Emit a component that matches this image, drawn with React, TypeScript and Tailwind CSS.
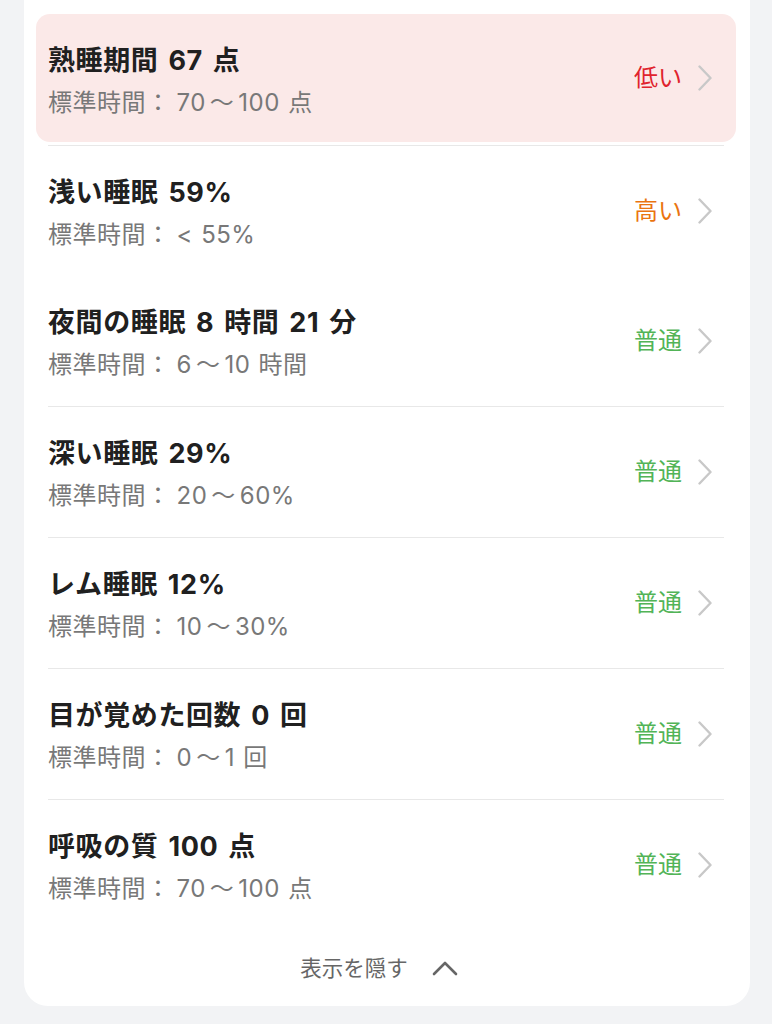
import React from 'react';

type Level = 'low' | 'high' | 'normal';

interface SleepItem {
  title: string;
  range: string;
  level: Level;
}

const items: SleepItem[] = [
  { title: '熟睡期間 67 点', range: '70～100 点', level: 'low' },
  { title: '浅い睡眠 59%', range: '< 55%', level: 'high' },
  { title: '夜間の睡眠 8 時間 21 分', range: '6～10 時間', level: 'normal' },
  { title: '深い睡眠 29%', range: '20～60%', level: 'normal' },
  { title: 'レム睡眠 12%', range: '10～30%', level: 'normal' },
  { title: '目が覚めた回数 0 回', range: '0～1 回', level: 'normal' },
  { title: '呼吸の質 100 点', range: '70～100 点', level: 'normal' },
];

const levelLabel: Record<Level, { text: string; className: string }> = {
  low: { text: '低い', className: 'text-[#e0232d]' },
  high: { text: '高い', className: 'text-[#ea7410]' },
  normal: { text: '普通', className: 'text-[#52b457]' },
};

const Chevron = () => (
  <svg width="14" height="26" viewBox="0 0 14 26" fill="none" aria-hidden="true">
    <polyline points="1.5,1.5 12.5,13 1.5,24.5" stroke="#c8c8c8" strokeWidth="2.4" strokeLinecap="round" strokeLinejoin="round" />
  </svg>
);

const Range: React.FC<{ value: string }> = ({ value }) => {
  const parts = value.split('～');
  return (
    <>
      {parts.map((p, i) => (
        <React.Fragment key={i}>
          {i > 0 && <span className="mx-[4px]">～</span>}
          {p}
        </React.Fragment>
      ))}
    </>
  );
};

const Row: React.FC<{ item: SleepItem; className?: string }> = ({ item, className }) => {
  const label = levelLabel[item.level];
  return (
    <div className={`flex items-stretch pl-3 pr-6 ${className ?? ''}`}>
      <div className="flex-1 pt-[30px]">
        <p className="text-[27px] leading-[34px] font-bold text-[#202020] tracking-[0.6px] [word-spacing:3px]">{item.title}</p>
        <p className="mt-[9px] text-[24px] leading-[32px] text-[#787878] tracking-[0.5px] [word-spacing:1px]">
          <span className="mr-[6px]">標準時間：</span>
          <Range value={item.range} />
        </p>
      </div>
      <div className="flex items-center gap-[16px]">
        <span className={`text-[24px] leading-none ${label.className}`}>{label.text}</span>
        <Chevron />
      </div>
    </div>
  );
};

const Divider = () => <div className="mx-3 h-px bg-[#e8e8e8]" />;

export default function App() {
  return (
    <div
      className="min-h-screen bg-[#f2f3f5] pl-6 pr-[22px]"
      style={{ fontFamily: 'Inter, "Noto Sans CJK JP", sans-serif' }}
    >
      <div className="bg-white rounded-b-[24px] pt-[14px] pl-3 pr-[14px]">
        <Row item={items[0]} className="h-[128px] rounded-[14px] bg-[#fbe9e8]" />
        <div className="mt-[3px]">
          <Divider />
        </div>
        <Row item={items[1]} className="h-[130px]" />
        {items.slice(2, 6).map((it) => (
          <React.Fragment key={it.title}>
            <Row item={it} className="h-[130px]" />
            <Divider />
          </React.Fragment>
        ))}
        <Row item={items[6]} className="h-[130px]" />
        <div className="h-[76px] pr-[14px] flex items-center justify-center gap-[24px]">
          <span className="text-[21.5px] text-[#666666]">表示を隠す</span>
          <svg width="26" height="15" viewBox="0 0 26 15" fill="none" aria-hidden="true">
            <polyline points="2,13 13,2 24,13" stroke="#666666" strokeWidth="2.6" strokeLinecap="round" strokeLinejoin="round" />
          </svg>
        </div>
      </div>
    </div>
  );
}
